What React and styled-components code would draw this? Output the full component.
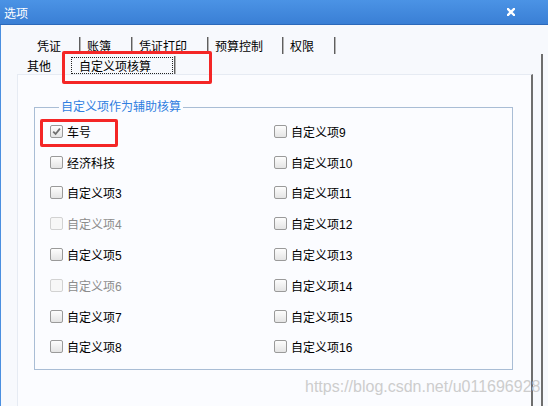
import React from 'react';
import styled, { createGlobalStyle } from 'styled-components';

const GlobalStyle = createGlobalStyle`
  html, body {
    margin: 0;
    padding: 0;
  }
  body {
    width: 548px;
    height: 406px;
    overflow: hidden;
    background: #f7f9fd;
    font-family: "Liberation Sans", "Noto Sans CJK SC", sans-serif;
    font-size: 12px;
  }
`;

const Window = styled.div`
  position: relative;
  width: 548px;
  height: 406px;
  display: flex;
  flex-direction: column;
  background: #f7f9fd;
  overflow: hidden;
`;

const TitleBar = styled.div`
  height: 24px;
  flex-shrink: 0;
  display: flex;
  align-items: center;
  justify-content: space-between;
  padding: 0 33px 0 4px;
  background: linear-gradient(#4b93e5, #3a7fd5);
  border-bottom: 1px solid #2c69ba;
  color: #fff;
  font-size: 12px;
`;

const CloseButton = styled.svg`
  width: 8px;
  height: 8px;
`;

const Client = styled.div`
  flex: 1;
  display: flex;
  flex-direction: column;
  border-left: 1px solid #4a8fe0;
`;

const TabRow = styled.div`
  display: flex;
  flex-shrink: 0;
  height: ${(p) => p.$height}px;
  margin-top: ${(p) => p.$top}px;
  padding-left: ${(p) => p.$indent}px;
`;

const Tab = styled.div`
  box-sizing: border-box;
  width: ${(p) => p.$width}px;
  padding-left: ${(p) => p.$pad}px;
  display: flex;
  align-items: center;
  color: #000;
  border-right: ${(p) => (p.$divider ? '1px solid #5f5f5f' : 'none')};
  box-shadow: ${(p) => (p.$divider ? '1px 0 0 #b4b4b4' : 'none')};
`;

const FocusRing = styled.span`
  height: 17px;
  display: flex;
  align-items: center;
  padding: 0 21px 0 7px;
  border: 1px dotted #222;
  box-sizing: border-box;
`;

const Sheet = styled.div`
  flex: 1;
  display: flex;
  flex-direction: column;
  width: 542px;
  box-sizing: border-box;
  border-right: 2px solid #6e6e6e;
`;

const Page = styled.div`
  flex: 1;
  box-sizing: border-box;
  margin: 0 8px 0 16px;
  padding: 24px 0 0 16px;
  background: #fbfcff;
  border-top: 1px solid #e6ebf3;
  border-left: 1px solid #e6ebf3;
  border-right: 2px solid #6e6e6e;
`;

const Group = styled.fieldset`
  box-sizing: border-box;
  width: 479px;
  margin: 0;
  padding: 1px 0 7px 15px;
  border: 1px solid #a9bdd5;
`;

const GroupLabel = styled.legend`
  margin-left: 9px;
  padding: 0 2px;
  color: #2f7ee0;
  font-size: 12px;
  line-height: 16px;
`;

const Options = styled.div`
  display: grid;
  grid-template-columns: 224px 1fr;
  grid-auto-rows: 30.8px;
  grid-auto-flow: column;
  grid-template-rows: repeat(8, 30.8px);
`;

const Option = styled.label`
  display: flex;
  align-items: center;
  gap: 4px;
  color: ${(p) => (p.$disabled ? '#8c8c8c' : '#000')};
`;

const Box = styled.span`
  box-sizing: border-box;
  width: 13px;
  height: 13px;
  border-radius: 2px;
  border: 1px solid ${(p) => (p.$disabled ? '#d2d2d2' : '#9a9a9a')};
  background: ${(p) =>
    p.$disabled ? '#f7f7f7' : 'linear-gradient(#fdfdfd, #e4e4e4)'};
  display: flex;
  align-items: center;
  justify-content: center;
`;

const Mark = styled.svg`
  width: 9px;
  height: 9px;
`;

const Annotation = styled.div`
  position: absolute;
  left: ${(p) => p.$x}px;
  top: ${(p) => p.$y}px;
  width: ${(p) => p.$w}px;
  height: ${(p) => p.$h}px;
  box-sizing: border-box;
  border: 3px solid #f42626;
  border-radius: 2px;
  pointer-events: none;
`;

const Watermark = styled.div`
  position: absolute;
  left: 305px;
  top: 378px;
  font-family: "Liberation Sans", Arial, sans-serif;
  font-size: 16px;
  color: #cdcdcd;
  white-space: nowrap;
  pointer-events: none;
`;

const topTabs = [
  { label: '凭证', width: 50 },
  { label: '账簿', width: 52 },
  { label: '凭证打印', width: 76 },
  { label: '预算控制', width: 75 },
  { label: '权限', width: 52 },
];

const options = [
  { label: '车号', checked: true },
  { label: '经济科技' },
  { label: '自定义项3' },
  { label: '自定义项4', disabled: true },
  { label: '自定义项5' },
  { label: '自定义项6', disabled: true },
  { label: '自定义项7' },
  { label: '自定义项8' },
  { label: '自定义项9' },
  { label: '自定义项10' },
  { label: '自定义项11' },
  { label: '自定义项12' },
  { label: '自定义项13' },
  { label: '自定义项14' },
  { label: '自定义项15' },
  { label: '自定义项16' },
];

function Checkbox({ checked, disabled }) {
  return (
    <Box $disabled={disabled}>
      {checked && (
        <Mark viewBox="0 0 9 9">
          <path
            d="M1.2 4.6 L3.6 7 L7.9 1.6"
            fill="none"
            stroke="#6f6f6f"
            strokeWidth="1.8"
          />
        </Mark>
      )}
    </Box>
  );
}

export default function App() {
  return (
    <>
      <GlobalStyle />
      <Window>
        <TitleBar>
          <span>选项</span>
          <CloseButton viewBox="0 0 8 8">
            <path
              d="M1 1 L7 7 M7 1 L1 7"
              stroke="#fff"
              strokeWidth="2.4"
              strokeLinecap="square"
            />
          </CloseButton>
        </TitleBar>
        <Client>
          <TabRow $top={12} $height={17} $indent={29}>
            {topTabs.map((t) => (
              <Tab key={t.label} $width={t.width} $pad={7} $divider>
                {t.label}
              </Tab>
            ))}
          </TabRow>
          <Sheet>
            <TabRow $top={2} $height={18} $indent={17}>
              <Tab $width={45} $pad={9}>
                其他
              </Tab>
              <Tab $width={112} $pad={8} $divider>
                <FocusRing>自定义项核算</FocusRing>
              </Tab>
            </TabRow>
            <Page>
              <Group>
                <GroupLabel>自定义项作为辅助核算</GroupLabel>
                <Options>
                  {options.map((o) => (
                    <Option key={o.label} $disabled={o.disabled}>
                      <Checkbox checked={o.checked} disabled={o.disabled} />
                      {o.label}
                    </Option>
                  ))}
                </Options>
              </Group>
            </Page>
          </Sheet>
        </Client>
        <Annotation $x={62} $y={51} $w={150} $h={33} />
        <Annotation $x={40} $y={119} $w={78} $h={28} />
        <Watermark>https://blog.csdn.net/u011696928</Watermark>
      </Window>
    </>
  );
}
